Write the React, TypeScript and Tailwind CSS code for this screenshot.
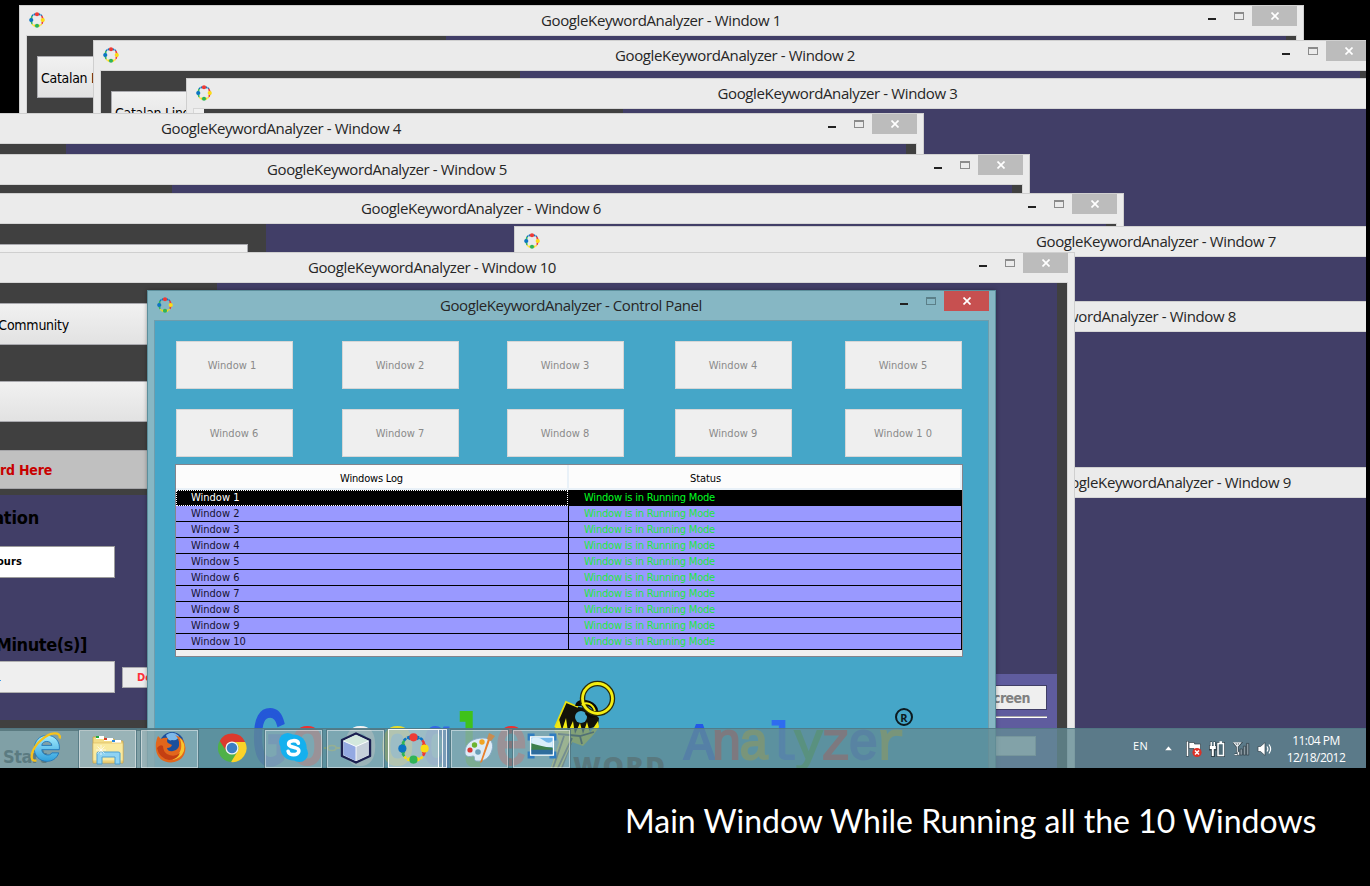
import React from "react";

const titleFont = "font-['Open_Sans','Noto_Sans',sans-serif]";
const tahoma = "font-['DejaVu_Sans_Condensed','DejaVu_Sans',sans-serif]";

function RingIcon({ className }: { className: string }) {
  return (
    <svg viewBox="0 0 32 32" className={className}>
      <g fill="none" strokeWidth="2.6" strokeDasharray="3.4 1.2">
        <path d="M6 8 A13 13 0 0 1 26 8" stroke="#0b74c4" />
        <path d="M25 7.5 A13 13 0 0 1 25 24.5" stroke="#ee3a35" />
        <path d="M25.500 24.500 A13 13 0 0 1 6.500 24.500" stroke="#fbdd14" />
        <path d="M6.500 24 A13 13 0 0 1 6.500 8" stroke="#2fb457" />
      </g>
      <path d="M8.500 5.500l4-2.500v4.500zM23.500 5.500l-4-2.500v4.500z" fill="#0b74c4" />
      <path d="M26.500 8.500l2.500 4h-4.500zM26.500 23.500l2.500-4h-4.500z" fill="#ee3a35" />
      <path d="M8.500 26.500l4 2.500v-4.500zM23.500 26.500l-4 2.500v-4.500z" fill="#fbdd14" />
      <path d="M5.500 8.500l-2.500 4h4.500zM5.500 23.500l-2.500-4h4.500z" fill="#2fb457" />
      <circle cx="16" cy="4.500" r="4.200" fill="#ee3a35" />
      <circle cx="27.500" cy="16" r="4.200" fill="#fbdd14" />
      <circle cx="16" cy="27.500" r="4.200" fill="#2fb457" />
      <circle cx="4.500" cy="16" r="4.200" fill="#0b74c4" />
    </svg>
  );
}

function Controls({ active = false }: { active?: boolean }) {
  return (
    <div className="flex items-start justify-self-end pr-[6px]">
      <span className="mt-[12px] mr-[18px] h-[2px] w-[8px] bg-[#222]" />
      <span
        className={
          active
            ? "mt-[6px] mr-[8px] h-[8px] w-[10px] border border-t-2 border-[#5b7f88]"
            : "mt-[6px] mr-[8px] h-[8px] w-[10px] border border-t-2 border-[#8b8b8b]"
        }
      />
      <span className={active ? "flex h-[20px] w-[45px] items-center justify-center bg-[#c75050]" : "flex h-[20px] w-[45px] items-center justify-center bg-[#bcbcbc]"}>
        <svg viewBox="0 0 8 8" className="h-[8px] w-[8px]">
          <path d="M0.500 0.500L7.500 7.500M7.500 0.500L0.500 7.500" stroke="#fff" strokeWidth="1.700" />
        </svg>
      </span>
    </div>
  );
}

type WinProps = {
  place: string;
  title: string;
  size?: string;
  controls?: boolean;
  children?: React.ReactNode;
};

function AppWindow({ place, title, size = "w-[1285px]", controls = true, children }: WinProps) {
  return (
    <section className={`absolute flex h-[800px] flex-col border border-[#cfcfcf] bg-[#ebebeb] px-[6px] ${size} ${place}`}>
      <header className="grid h-[29px] shrink-0 grid-cols-[1fr_auto_1fr] items-start">
        <RingIcon className="mt-[6px] ml-[3px] h-[16px] w-[16px]" />
        <h2 className={`${titleFont} -ml-px pt-[4px] text-[15px] leading-[20px] tracking-[-0.38px] whitespace-pre text-[#262626]`}>{title}</h2>
        {controls ? <div className="-mr-[6px] justify-self-end"><Controls /></div> : <span />}
      </header>
      <div className="flex min-h-0 grow border border-[#d6d6d6] bg-[#404040]">{children}</div>
    </section>
  );
}

function Body({ children }: { children?: React.ReactNode }) {
  return (
    <>
      <div className="w-[419px] shrink-0">{children}</div>
      <div className="mr-[10px] grow bg-[#413e67]" />
    </>
  );
}

function LangButton() {
  return (
    <div className={`${tahoma} mt-[20px] ml-[10px] flex h-[42px] w-[391px] items-center border border-[#a9a9ae] bg-linear-to-b from-[#f1f1f1] to-[#e2e2e2] px-[3px] pt-[2px] text-[14px] tracking-[-0.3px] whitespace-nowrap text-black`}>
      Catalan Linguistic Community
    </div>
  );
}

function MainWindowBody() {
  return (
    <div className={`${tahoma} flex grow`}>
      <div className="flex grow flex-col">
        <div className="flex h-[212px] shrink-0">
          <div className="flex w-[419px] shrink-0 flex-col pt-[20px] pl-[10px]">
            <div className="flex h-[42px] w-[391px] items-center border border-[#a9a9ae] bg-linear-to-b from-[#f1f1f1] to-[#e2e2e2] pt-[2px] pr-[129px] text-[14px] tracking-[-0.25px] text-black">
              <span className="ml-auto">Community</span>
            </div>
            <div className="mt-[36px] h-[41px] w-[391px] border border-[#a9a9ae] bg-linear-to-b from-[#f1f1f1] to-[#e2e2e2]" />
            <div className="mt-[28px] flex h-[39px] w-[391px] items-center border border-[#a5a5a8] bg-[#c0c0c0] pt-[2px] pr-[146px] text-[14px] font-bold tracking-[-0.2px] text-[#c80000]">
              <span className="ml-auto">rd Here</span>
            </div>
          </div>
          <div className="grow bg-[#413e67]" />
        </div>
        <div className="flex h-[225px] shrink-0 bg-[#413e67]">
          <div className="flex w-[317px] shrink-0 flex-col text-black">
            <div className="mt-[12px] ml-auto mr-[76px] text-[18px] leading-[22px] font-bold tracking-[-0.2px]">ation</div>
            <div className="mt-[17px] flex h-[32px] items-center border border-[#9c9c9c] bg-white pt-px pr-[92px] text-[11px] font-bold tracking-[0.1px]">
              <span className="ml-auto">ours</span>
            </div>
            <div className="mt-[56px] mr-[28px] ml-auto text-[18px] leading-[22px] font-bold tracking-[-0.4px]">Minute(s)]</div>
            <div className="mt-[5px] flex h-[32px] items-center border border-[#b0b0b0] bg-[#efefef]">
              <span className="mt-[6px] ml-[200px] h-px w-[2px] bg-[#3b9be8]" />
            </div>
          </div>
          <div className="mt-[172px] ml-[7px] flex h-[21px] w-[80px] items-center border border-[#a9a9ae] bg-[#ececec] pt-px pl-[14px] text-[11px] font-bold text-[#ff2f38]">
            Delay
          </div>
          <div className="mt-[179px] ml-auto flex w-[200px] flex-col items-end bg-[#5f5c9e] pr-[10px]">
            <div className="mt-[11px] flex h-[25px] w-[150px] items-center justify-end border border-[#403e66] bg-[#efefef] pt-[2px] pr-[16px] text-[14px] font-bold tracking-[-0.55px] text-[#808080]">
              Full Screen
            </div>
            <div className="mt-[6px] h-[2px] w-[150px] border-t border-[#a8a8a8] bg-white" />
          </div>
        </div>
        <div className="flex h-[60px] justify-between">
          <div className="mt-[11px] flex h-[50px] w-[391px] items-center bg-[#e6e6e6] pl-[205px] text-[18px] font-bold tracking-[-0.5px] text-[#404040]">
            Start
          </div>
          <div className="flex w-[200px] justify-end bg-[#5f5c9e] pt-[16px] pr-[21px]">
            <div className="h-[20px] w-[150px] border border-[#bbb] bg-[#efefef]" />
          </div>
        </div>
      </div>
      <div className="w-[10px] shrink-0" />
    </div>
  );
}

const rowsOfButtons = [
  ["Window 1", "Window 2", "Window 3", "Window 4", "Window 5"],
  ["Window 6", "Window 7", "Window 8", "Window 9", "Window 1 0"],
];

function LogTable() {
  return (
    <div className={`${tahoma} ml-[20px] flex h-[193px] w-[788px] flex-col border border-[#84848c] bg-[#f0f0f0] text-[11px]`}>
      <div className="flex h-[25px] shrink-0 border-b-2 border-[#e9f1f8] bg-[#fcfcfc] text-black">
        <div className="flex w-[393px] items-center justify-center border-r-2 border-[#e9f1f8] pt-[5px] tracking-[-0.2px]">Windows Log</div>
        <div className="flex grow items-center border-r-2 border-[#e9f1f8] pt-[5px] pl-[121px] tracking-[-0.1px]">Status</div>
      </div>
      {Array.from({ length: 10 }, (_, i) => (
        <div
          key={i}
          className={
            i === 0
              ? "flex h-[16px] shrink-0 bg-black text-white"
              : "flex h-[16px] shrink-0 border-b border-black bg-[#9999ff] text-[#161230]"
          }
        >
          <div className={i === 0 ? "w-[392px] border border-dotted border-white pl-[14px] leading-[13px]" : "w-[393px] border-r border-black pl-[15px] leading-[16px]"}>
            Window {i + 1}
          </div>
          <div className={i === 0 ? "grow pl-[16px] leading-[15px] tracking-[-0.2px] text-[#00ff20]" : "grow border-r border-black pl-[15px] leading-[16px] tracking-[-0.2px] text-[#1fe83c]"}>
            Window is in Running Mode
          </div>
        </div>
      ))}
    </div>
  );
}

const mono = "font-['Liberation_Mono',monospace] leading-none";

function KeyArt() {
  return (
    <svg viewBox="0 0 80 90" className="absolute left-[395px] top-[359px] h-[90px] w-[80px]">
      <path d="M16 22L29 27L40 29L49 38L48 46L41 48L31 63L23 60L12 90L0 90L10 60L4 50Z" fill="#12120a" />
      <path d="M5 47L16 22L28 27" fill="none" stroke="#e9e010" strokeWidth="1.800" />
      <path d="M4 50L9 39L12 50L16 38L18 52L23 41L25 54L30 43L33 54L37 42L40 53L48 41L49 47L44 54L33 66L22 62L10 90L0 90L9 62Z" fill="#f2ea12" />
      <path d="M8 54L30 56L44 52M22 58L7 90M14 56L3 88M30 56L32 64" fill="none" stroke="#12120a" strokeWidth="1.800" />
      <circle cx="31" cy="37" r="6" fill="#45a6c8" />
      <path d="M28 26C28 20 42 22 45 29C47 35 41 37 37 32" fill="none" stroke="#0a0a06" strokeWidth="5.500" />
      <circle cx="47.500" cy="18.500" r="15" fill="none" stroke="#2c2c08" strokeWidth="5.400" />
      <circle cx="47.500" cy="18.500" r="15" fill="none" stroke="#f5ee12" strokeWidth="2.800" />
      <path d="M32 25C36 21 43 24 45 31" fill="none" stroke="#f5ee12" strokeWidth="2" />
    </svg>
  );
}

function Logo() {
  return (
    <>
      <div className={`${mono} absolute left-[93px] top-[391px] flex items-baseline text-[68px]`}>
        <span className="flex w-[42px] justify-center"><span className="origin-[50%_80%] scale-x-85 scale-y-120 text-[#2458d8] [-webkit-text-stroke:3px_#2458d8]">G</span></span>
        <span className="flex w-[34px] justify-center"><span className="scale-x-85 text-[#ee2f2f] [-webkit-text-stroke:3px_#ee2f2f]">o</span></span>
        <span className="ml-[19px] flex w-[34px] justify-center"><span className="scale-x-85 text-[#f2f2f2] [-webkit-text-stroke:3px_#f2f2f2]">o</span></span>
        <span className="flex w-[40px] justify-center"><span className="scale-x-85 text-[#e5dc2c] [-webkit-text-stroke:3px_#e5dc2c]">o</span></span>
        <span className="flex w-[40px] justify-center"><span className="scale-x-75 text-[#3467e6] [-webkit-text-stroke:3px_#3467e6]">g</span></span>
        <span className="flex w-[22px] justify-center"><span className="scale-x-60 text-[#3fc21b] [-webkit-text-stroke:6px_#3fc21b]">l</span></span>
        <span className="ml-[16px] flex w-[32px] justify-center"><span className="scale-x-80 text-[#ee2f2f] [-webkit-text-stroke:3px_#ee2f2f]">e</span></span>
      </div>
      <svg viewBox="0 0 20 8" className="absolute left-[168px] top-[423px] h-[8px] w-[20px]">
        <path d="M1 4h4M13 4h4" stroke="#cfd61c" strokeWidth="2" />
        <ellipse cx="9" cy="4" rx="4" ry="2.500" fill="none" stroke="#cfd61c" strokeWidth="1.500" />
      </svg>
      <div className={`${mono} absolute left-[529px] top-[399px] text-[51px] tracking-[-3.300px]`}>
        <span className="text-[#2458e8] [-webkit-text-stroke:2px_#2458e8]">A</span>
        <span className="text-[#d83a3a] [-webkit-text-stroke:2px_#d83a3a]">n</span>
        <span className="text-[#c8b820] [-webkit-text-stroke:2px_#c8b820]">a</span>
        <span className="text-[#2f6cf0] [-webkit-text-stroke:2px_#2f6cf0]">l</span>
        <span className="text-[#3aa63a] [-webkit-text-stroke:2px_#3aa63a]">y</span>
        <span className="text-[#d83a3a] [-webkit-text-stroke:2px_#d83a3a]">z</span>
        <span className="text-[#3467d6] [-webkit-text-stroke:2px_#3467d6]">e</span>
        <span className="text-[#c8b820] [-webkit-text-stroke:2px_#c8b820]">r</span>
      </div>
      <div className="absolute left-[418px] top-[431px] font-['Open_Sans',sans-serif] text-[27px] leading-none font-extrabold tracking-[1.500px] text-[#3a3a3a]">WORD</div>
      <div className="absolute left-[740px] top-[387px] flex h-[18px] w-[18px] items-center justify-center rounded-full border-2 border-[#0c1a20] font-['Open_Sans',sans-serif] text-[11px] leading-none font-bold text-[#0c1a20]">R</div>
      <KeyArt />
    </>
  );
}

function ControlPanel() {
  return (
    <section className="absolute left-[147px] top-[290px] flex h-[600px] w-[849px] flex-col border border-[#5c8f9c] bg-[#86b7c4] px-[6px] shadow-[0_0_4px_rgba(0,0,0,0.35)]">
      <header className="grid h-[29px] shrink-0 grid-cols-[1fr_auto_1fr] items-start">
        <RingIcon className="mt-[6px] ml-[3px] h-[16px] w-[16px]" />
        <h2 className={`${titleFont} -ml-px pt-[4px] text-[15px] leading-[20px] tracking-[-0.420px] whitespace-pre text-[#262626]`}>GoogleKeywordAnalyzer - Control Panel</h2>
        <div className="-mr-[6px] justify-self-end"><Controls active /></div>
      </header>
      <div className="relative flex grow flex-col border border-[#6f9dac] bg-[#45a6c8] pt-[20px]">
        {rowsOfButtons.map((row, r) => (
          <div key={r} className={`${tahoma} grid h-[68px] shrink-0 grid-cols-[166px_165px_168px_170px_117px] items-start pl-[21px] text-[11px] text-[#8a8a8a]`}>
            {row.map((label, c) => (
              <div key={label} className={c === 0 && r === 0 ? "flex h-[48px] w-[117px] items-center justify-center border border-[#d6d6d6] bg-[#efefef] pt-[2px] pr-[5px]" : "flex h-[48px] w-[117px] items-center justify-center border border-[#d6d6d6] bg-[#efefef] pt-[2px] pr-px"}>
                {label}
              </div>
            ))}
          </div>
        ))}
        <div className="-mt-[13px]"><LogTable /></div>
        <Logo />
      </div>
    </section>
  );
}

function IEIcon() {
  return (
    <svg viewBox="0 0 32 32" className="-mt-[4px] h-[34px] w-[34px]">
      <defs><linearGradient id="ie" x1="0" y1="0" x2="0" y2="1"><stop offset="0" stopColor="#a4ecfd" /><stop offset="1" stopColor="#2e9fdc" /></linearGradient></defs>
      <path d="M28.500 18.500H12C12.500 24 20 25 21.500 21.500H28C26 27.500 21 29.500 17 29.500C10 29.500 5 24.500 5 17.500C5 10.500 10 5 17 5C25 5 29.500 11.500 28.500 18.500ZM12 14.500H21.500C21 9.500 12.500 9.500 12 14.500Z" fill="url(#ie)" stroke="#1c74b8" strokeWidth="0.800" />
      <path d="M7 28.500C-1 31 2 17 12 9C20 2 30 1 29 8" fill="none" stroke="#f6c21c" strokeWidth="2.200" />
    </svg>
  );
}

function FolderIcon() {
  return (
    <svg viewBox="0 0 32 32" className="h-[32px] w-[32px]">
      <path d="M1 4h11l2 2h8l2 2h7v22H1z" fill="#f2dc87" stroke="#c99e3c" strokeWidth="0.700" />
      <path d="M4 3h8v3H4zM12 5h9v3h-9zM20 7h9v3h-9z" fill="#fff" />
      <path d="M4 3h3v2H4z" fill="#1faa3c" /><path d="M12 5h3v2h-3z" fill="#d8402c" /><path d="M20 7h3v2h-3z" fill="#2a8be0" />
      <path d="M1 10h30v18H1z" fill="#f9eaa0" stroke="#d8b55a" strokeWidth="0.600" />
      <path d="M5 31V20Q5 19 7 19H26Q28 19 28 20V31H23V24H10V31Z" fill="#8fd3f2" stroke="#4d9fd0" />
      <path d="M9 12v10M4 17h10M5.500 13.500l7 7M12.500 13.500l-7 7" stroke="#fff" strokeWidth="0.700" />
    </svg>
  );
}

function FirefoxIcon() {
  return (
    <svg viewBox="0 0 32 32" className="-mt-[4px] h-[32px] w-[32px] translate-x-px">
      <circle cx="17" cy="13" r="12" fill="#1c4f9c" />
      <path d="M11 4Q18-1 24 5Q23 10 17 9Q13 11 11 4Z" fill="#7cb8ea" />
      <path d="M3 5L6 8Q9 6 13 7Q11 10 13 12L17 14Q16 17 12 17Q13 21 18 20Q25 19 24 11Q23 6 20 4Q30 7 30.500 17Q30 30 16 31.500Q3 31 1 19Q0 11 3 5Z" fill="#e2661c" />
      <path d="M24 6Q31 12 29 20Q26 28 17 29Q24 25 26 18Q27 11 24 6Z" fill="#f9c52e" />
      <path d="M2 17Q4 27 14 29Q22 29 25 22Q19 27 12 23Q8 20 8 15Q5 13 2 17Z" fill="#c43f12" />
    </svg>
  );
}

function ChromeIcon() {
  return (
    <svg viewBox="0 0 32 32" className="-mt-[2px] h-[30px] w-[30px]">
      <circle cx="16" cy="16" r="15" fill="#4fb148" />
      <path d="M3 8.500A15 15 0 0 1 30 9.500H16A7 7 0 0 0 10 19.500Z" fill="#dc3a2e" />
      <path d="M30 9.500A15 15 0 0 1 15 31L22 19.500A7 7 0 0 0 19 9.500Z" fill="#fbd328" />
      <circle cx="16" cy="16" r="7" fill="#f4f4f4" />
      <circle cx="16" cy="16" r="5.600" fill="#3c7ec4" />
    </svg>
  );
}

function SkypeIcon() {
  return (
    <svg viewBox="0 0 32 32" className="-mt-[4px] h-[31px] w-[31px]">
      <g fill="#14b0ee"><circle cx="10" cy="10" r="9" /><circle cx="22" cy="22" r="9" /><circle cx="16" cy="16" r="13.500" /></g>
      <path d="M21 11.500C20 8 11 8 11 12.500C11 17 21.500 14.500 21.500 19.500C21.500 24.500 11 24.500 10.500 20" fill="none" stroke="#fff" strokeWidth="3.800" strokeLinecap="round" />
    </svg>
  );
}

function CubeIcon() {
  return (
    <svg viewBox="0 0 32 32" className="-mt-[3px] h-[32px] w-[32px]">
      <path d="M16 1.500L30 8V24L16 30.500L2 24V8Z" fill="#dfe9f4" stroke="#1b1f50" strokeWidth="2.400" strokeLinejoin="round" />
      <path d="M16 2.800L28.500 8.700L16 14.500L3.500 8.700Z" fill="#d3e8dd" />
      <path d="M3.500 9L16 14.500V29L3.500 23Z" fill="#93a9e2" />
      <path d="M28.500 9L16 14.500V29L28.500 23Z" fill="#c5d0da" />
      <path d="M3.500 9L16 14.500V29M16 14.500L28.500 9" fill="none" stroke="#fff" strokeWidth="0.900" />
    </svg>
  );
}

function PaintIcon() {
  return (
    <svg viewBox="0 0 32 32" className="-mt-[3px] h-[32px] w-[32px]">
      <path d="M1 20C1 11 9 6 19 6C27 6 30 11 28 18C26 25 21 30 12 29C9 28 12 24 9 24C5 25 1 25 1 20Z" fill="#dcebf6" stroke="#86a9c4" strokeWidth="0.900" />
      <circle cx="6" cy="18" r="2.600" fill="#d93a34" /><circle cx="10.500" cy="13" r="2.700" fill="#6cb42f" /><circle cx="18" cy="10" r="2.700" fill="#f0a422" /><circle cx="14" cy="20" r="2.800" fill="#6b9fb8" />
      <path d="M26 8L18 30L16 31L17 28L24 7Z" fill="#e8802c" />
      <path d="M23 7L25 1L31 4L27 9Z" fill="#c88c50" />
    </svg>
  );
}

function PhotoIcon() {
  return (
    <svg viewBox="0 0 32 28" className="-mt-[6px] h-[26px] w-[30px]">
      <path d="M2 8V2H8M24 2H30V8M30 20V26H24M8 26H2V20" fill="none" stroke="#2f7cc0" strokeWidth="3" />
      <path d="M3 3.500h26v21H3z" fill="#fff" />
      <path d="M4.500 5h23v18h-23z" fill="#6fb6ea" />
      <path d="M4.500 6Q12 3 18 8T27.500 8V15H4.500Z" fill="#d9eefa" />
      <path d="M4.500 11Q13 14 27.500 16V18.500H4.500Z" fill="#3c7f4c" />
      <path d="M4.500 18h23v5h-23z" fill="#2e6c9c" />
    </svg>
  );
}

function TaskButton({ children }: { children: React.ReactNode }) {
  return (
    <div className="h-[40px] w-[59px] border border-[#4f7480]/80">
      <div className="flex h-full w-full items-center justify-center border border-white/45 bg-white/20">{children}</div>
    </div>
  );
}

function Tray() {
  return (
    <div className="ml-auto flex items-center pr-[20px] text-white">
      <span className="mr-[16px] -mt-[4px] font-['Open_Sans',sans-serif] text-[11px] tracking-[0.300px]">EN</span>
      <svg viewBox="0 0 9 6" className="mr-[12px] h-[5px] w-[9px]"><path d="M4.500 0L9 5.500H0Z" fill="#fff" stroke="#3f5d6a" strokeWidth="0.500" /></svg>
      <svg viewBox="0 0 18 18" className="mr-[6px] h-[18px] w-[18px]">
        <path d="M2.500 1v15.500" stroke="#33434c" strokeWidth="3" />
        <path d="M2.500 1.500v14.500" stroke="#fff" strokeWidth="1.600" />
        <path d="M4 2.500h5.500v1.500h6V10H9V8.500H4z" fill="#fff" stroke="#33434c" strokeWidth="0.700" />
        <circle cx="12" cy="12.500" r="4.600" fill="#dc3026" />
        <path d="M10 10.500l4 4M14 10.500l-4 4" stroke="#fff" strokeWidth="1.500" />
      </svg>
      <svg viewBox="0 0 16 16" className="mr-[8px] h-[16px] w-[16px]">
        <path d="M2 0.500v5M5.500 0.500v5M0.500 5.500h6.500v3H5V15.500H3V8.500H0.500z" stroke="#33434c" strokeWidth="2.200" fill="none" />
        <path d="M2.200 1v4M5.300 1v4" stroke="#fff" strokeWidth="1.400" />
        <path d="M0.800 5h6v3h-2V15h-2V8h-2z" fill="#fff" />
        <path d="M9 2.500h5.500v12H9z" fill="#4e6b78" stroke="#33434c" strokeWidth="3" />
        <path d="M9 2.500h5.500v12H9zM10.500 1h2.500" fill="#4e6b78" stroke="#fff" strokeWidth="1.500" />
      </svg>
      <svg viewBox="0 0 17 15" className="mr-[7px] h-[14px] w-[17px]">
        <path d="M4 10h2.500v4H4z" fill="#fff" stroke="#2e3b42" strokeWidth="0.600" />
        <path d="M7 7.500h2.500V14H7zM10.500 4.500H13V14h-2.500zM13.800 1.500h2.500V14h-2.500z" fill="#8b9aa2" stroke="#2e3b42" strokeWidth="0.700" />
        <path d="M0.500 1h7L4 5zM4 1v10M1 13.500h3" fill="none" stroke="#2e3b42" strokeWidth="2.600" />
        <path d="M0.500 1h7L4 5zM4 1v10M1 13.500h3" fill="none" stroke="#e8eef2" strokeWidth="1.200" />
      </svg>
      <svg viewBox="0 0 16 16" className="mr-[13px] h-[16px] w-[16px]">
        <path d="M1 5.500h2.500L8 1.500v13L3.500 10.500H1z" fill="#fff" stroke="#33434c" strokeWidth="0.700" />
        <path d="M10 5.500q1.800 2.500 0 5M12 3.500q3.200 4.500 0 9" fill="none" stroke="#fff" strokeWidth="1.200" />
      </svg>
      <div className="flex w-[60px] flex-col items-center font-['Open_Sans',sans-serif] text-[12px] leading-[17px] tracking-[-0.500px] whitespace-nowrap">
        <span>11:04 PM</span>
        <span>12/18/2012</span>
      </div>
    </div>
  );
}

function Taskbar() {
  return (
    <div className="absolute bottom-0 left-0 flex h-[40px] w-full border-t border-[#4d7480]/70 bg-[rgba(99,140,147,0.78)]">
      <div className="flex gap-[3px] pl-[16px]">
        <div className="flex w-[59px] items-center justify-center"><IEIcon /></div>
        <TaskButton><FolderIcon /></TaskButton>
        <TaskButton><FirefoxIcon /></TaskButton>
        <div className="flex w-[59px] items-center justify-center"><ChromeIcon /></div>
        <TaskButton><SkypeIcon /></TaskButton>
        <TaskButton><CubeIcon /></TaskButton>
        <div className="flex h-[39px] w-[59px]">
          <div className="flex w-[52px] items-center justify-center border border-white/90 bg-white/40"><RingIcon className="-mt-px h-[31px] w-[31px]" /></div>
          <div className="w-[4px] border-y border-r border-white/85 bg-white/20" />
          <div className="w-[4px] border-y border-r border-white/80 bg-white/20" />
        </div>
        <TaskButton><PaintIcon /></TaskButton>
        <TaskButton><PhotoIcon /></TaskButton>
      </div>
      <Tray />
    </div>
  );
}

export default function App() {
  return (
    <main className="flex h-[886px] w-[1370px] flex-col overflow-hidden bg-black">
      <div className="relative h-[768px] w-[1366px] shrink-0 overflow-hidden">
        <AppWindow place="left-[19px] top-[5px]" title="GoogleKeywordAnalyzer - Window 1"><Body><LangButton /></Body></AppWindow>
        <AppWindow place="left-[93px] top-[40px]" title="GoogleKeywordAnalyzer - Window 2"><Body><LangButton /></Body></AppWindow>
        <AppWindow place="left-[186px] top-[78px]" size="w-[1304px]" title="GoogleKeywordAnalyzer - Window 3" controls={false}>
          <div className="w-[10px] bg-[#f0f0f0]" />
          <Body />
        </AppWindow>
        <AppWindow place="left-[-361px] top-[113px]" title="GoogleKeywordAnalyzer - Window 4"><Body /></AppWindow>
        <AppWindow place="left-[-255px] top-[154px]" title="GoogleKeywordAnalyzer - Window 5"><Body /></AppWindow>
        <AppWindow place="left-[-161px] top-[193px]" title="GoogleKeywordAnalyzer - Window 6"><Body><LangButton /></Body></AppWindow>
        <AppWindow place="left-[514px] top-[226px]" title="GoogleKeywordAnalyzer - Window 7"><Body /></AppWindow>
        <AppWindow place="left-[474px] top-[301px]" title="GoogleKeywordAnalyzer - Window 8"><Body /></AppWindow>
        <AppWindow place="left-[529px] top-[467px]" title="GoogleKeywordAnalyzer - Window 9"><Body /></AppWindow>
        <AppWindow place="left-[-210px] top-[252px]" title="GoogleKeywordAnalyzer - Window 10"><MainWindowBody /></AppWindow>
        <ControlPanel />
        <Taskbar />
      </div>
      <p className="pt-[33px] pl-[625px] font-['Lato','Open_Sans',sans-serif] text-[32px] leading-[40px] whitespace-nowrap text-white">
        Main Window While Running all the 10 Windows
      </p>
    </main>
  );
}
